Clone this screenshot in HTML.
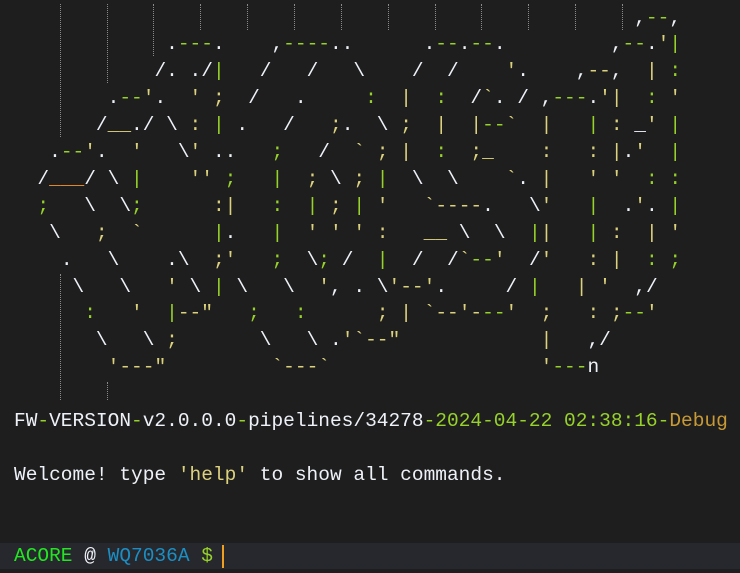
<!DOCTYPE html>
<html><head><meta charset="utf-8"><style>
html,body{margin:0;padding:0;background:#1e1e1e;width:740px;height:573px;overflow:hidden;position:relative}
pre{margin:0;position:absolute;left:14px;font-family:"Liberation Mono",monospace;font-size:19.5px;line-height:26.9px;color:#f2f2f2;white-space:pre}
.g{position:absolute;width:0;border-left:1.5px dotted #8a8a8a}
.bar{position:absolute;left:0;top:543px;width:740px;height:26px;background:#27272e}
.y{color:#dcd27e}.gr{color:#97d22a}.o{color:#f0922a}.w{color:#eef2f8}.dg{color:#c89a36}.b{color:#1b8fc4}.lg{color:#22e622}
</style></head><body>
<div class="g" style="left:60px;top:4px;height:133px"></div>
<div class="g" style="left:60px;top:274px;height:126px"></div>
<div class="g" style="left:107px;top:4px;height:79px"></div>
<div class="g" style="left:107px;top:382px;height:18px"></div>
<div class="g" style="left:153px;top:4px;height:52px"></div>
<div class="g" style="left:200px;top:4px;height:26px"></div>
<div class="g" style="left:247px;top:4px;height:26px"></div>
<div class="g" style="left:294px;top:4px;height:26px"></div>
<div class="g" style="left:341px;top:4px;height:26px"></div>
<div class="g" style="left:388px;top:4px;height:26px"></div>
<div class="g" style="left:435px;top:4px;height:26px"></div>
<div class="g" style="left:481px;top:4px;height:26px"></div>
<div class="g" style="left:528px;top:4px;height:26px"></div>
<div class="g" style="left:575px;top:4px;height:26px"></div>
<div class="g" style="left:622px;top:4px;height:26px"></div>
<pre id="art" style="top:4.5px">                                                     ,--,
             .---.    ,----..      .--.--.         ,--.'|
            /. ./|   /   /   \    /  /    '.    ,--,  | :
        .--'.  ' ;  /   .     :  |  :  /`. / ,---.'|  : '
       /__./ \ : | .   /   ;.  \ ;  |  |--`  |   | : _' |
   .--'.  '   \' ..   ;   /  ` ; |  :  ;_    :   : |.'  |
  /___/ \ |    '' ;   |  ; \ ; |  \  \    `. |   ' '  : :
  ;   \  \;      :|   :  | ; | '   `----.   \'   |  .'. |
   \   ;  `      |.   |  ' ' ' :   __ \  \  ||   | :  | '
    .   \    .\  ;'   ;  \; /  |  /  /`--'  /'   : |  : ;
     \   \   ' \ | \   \  ', . \'--'.     / |   | '  ,/
      :   '  |--"   ;   :      ; | `--'---'  ;   : ;--'
       \   \ ;       \   \ .'`--"            |   ,/
        '---"         `---`                  '---n</pre>
<pre style="top:408px"><span class="w">FW</span><span class="gr">-</span><span class="w">VERSION</span><span class="gr">-</span><span class="w">v2.0.0.0</span><span class="gr">-</span><span class="w">pipelines/34278</span><span class="gr">-2024-04-22 02:38:16-</span><span class="dg">Debug</span>

<span class="w">Welcome! type </span><span class="y">'help'</span><span class="w"> to show all commands.</span></pre>
<div class="bar"></div>
<pre style="top:542.5px"><span class="lg">ACORE</span> <span class="w">@</span> <span class="b">WQ7036A</span> <span class="gr">$</span> </pre>
<div style="position:absolute;left:222px;top:545px;width:2px;height:23px;background:#f0a020"></div>
<script>
(function(){var p=document.getElementById('art');var t=p.textContent;var h='';var lines=t.split('\n');
lines.forEach(function(l,ri){for(var i=0;i<l.length;i++){var c=l[i];var cl='';
if(c==' '){h+=' ';continue;}
if('/\\.,n'.indexOf(c)>=0)cl='w';else if(c=='-')cl=(ri==7||ri==10||(ri==11&&i<40)||(ri==12)||(ri==13&&i<30)||ri==2&&i>45)?'y':'gr';
else if(c=='_')cl=(i<8&&ri>=4)?'o':'y';else if(c=='|')cl=(i%3==0)?'y':'gr';else if(c==':'||c==';')cl=(i%2==0)?'gr':'y';else cl='y';
if(ri==4&&c=='_'&&i>50)cl='w';
h+='<span class="'+cl+'">'+(c=='<'?'&lt;':c)+'</span>';}
if(ri<lines.length-1)h+='\n';});p.innerHTML=h;})();
</script>
</body></html>
